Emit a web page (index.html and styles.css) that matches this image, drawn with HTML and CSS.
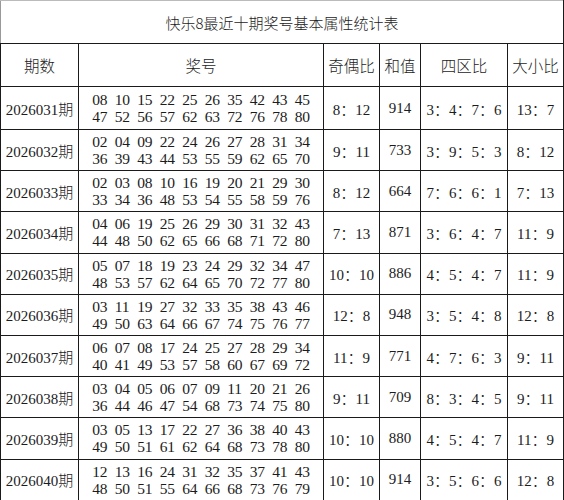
FILE: index.html
```html
<!DOCTYPE html>
<html lang="zh-CN">
<head>
<meta charset="utf-8">
<title>快乐8最近十期奖号基本属性统计表</title>
<link rel="stylesheet" href="styles.css">
</head>
<body>
<table class="stats">
  <colgroup>
    <col class="c-issue"><col class="c-nums"><col class="c-oe"><col class="c-sum"><col class="c-zone"><col class="c-bs">
  </colgroup>
  <tr class="title-row"><td colspan="6" class="title">快乐8最近十期奖号基本属性统计表</td></tr>
  <tr class="head-row">
    <td class="th">期数</td><td class="th">奖号</td><td class="th">奇偶比</td><td class="th">和值</td><td class="th">四区比</td><td class="th">大小比</td>
  </tr>
  <tr class="row first">
    <td class="issue">2026031<span class="cjk">期</span></td>
    <td><div class="nums"><span>08</span><span>10</span><span>15</span><span>22</span><span>25</span><span>26</span><span>35</span><span>42</span><span>43</span><span>45</span><span>47</span><span>52</span><span>56</span><span>57</span><span>62</span><span>63</span><span>72</span><span>76</span><span>78</span><span>80</span></div></td>
    <td class="val">8<span class="cjk">：</span>12</td><td class="val">914</td><td class="val">3<span class="cjk">：</span>4<span class="cjk">：</span>7<span class="cjk">：</span>6</td><td class="val">13<span class="cjk">：</span>7</td>
  </tr>
  <tr class="row">
    <td class="issue">2026032<span class="cjk">期</span></td>
    <td><div class="nums"><span>02</span><span>04</span><span>09</span><span>22</span><span>24</span><span>26</span><span>27</span><span>28</span><span>31</span><span>34</span><span>36</span><span>39</span><span>43</span><span>44</span><span>53</span><span>55</span><span>59</span><span>62</span><span>65</span><span>70</span></div></td>
    <td class="val">9<span class="cjk">：</span>11</td><td class="val">733</td><td class="val">3<span class="cjk">：</span>9<span class="cjk">：</span>5<span class="cjk">：</span>3</td><td class="val">8<span class="cjk">：</span>12</td>
  </tr>
  <tr class="row">
    <td class="issue">2026033<span class="cjk">期</span></td>
    <td><div class="nums"><span>02</span><span>03</span><span>08</span><span>10</span><span>16</span><span>19</span><span>20</span><span>21</span><span>29</span><span>30</span><span>33</span><span>34</span><span>36</span><span>48</span><span>53</span><span>54</span><span>55</span><span>58</span><span>59</span><span>76</span></div></td>
    <td class="val">8<span class="cjk">：</span>12</td><td class="val">664</td><td class="val">7<span class="cjk">：</span>6<span class="cjk">：</span>6<span class="cjk">：</span>1</td><td class="val">7<span class="cjk">：</span>13</td>
  </tr>
  <tr class="row">
    <td class="issue">2026034<span class="cjk">期</span></td>
    <td><div class="nums"><span>04</span><span>06</span><span>19</span><span>25</span><span>26</span><span>29</span><span>30</span><span>31</span><span>32</span><span>43</span><span>44</span><span>48</span><span>50</span><span>62</span><span>65</span><span>66</span><span>68</span><span>71</span><span>72</span><span>80</span></div></td>
    <td class="val">7<span class="cjk">：</span>13</td><td class="val">871</td><td class="val">3<span class="cjk">：</span>6<span class="cjk">：</span>4<span class="cjk">：</span>7</td><td class="val">11<span class="cjk">：</span>9</td>
  </tr>
  <tr class="row">
    <td class="issue">2026035<span class="cjk">期</span></td>
    <td><div class="nums"><span>05</span><span>07</span><span>18</span><span>19</span><span>23</span><span>24</span><span>29</span><span>32</span><span>34</span><span>47</span><span>48</span><span>53</span><span>57</span><span>62</span><span>64</span><span>65</span><span>70</span><span>72</span><span>77</span><span>80</span></div></td>
    <td class="val">10<span class="cjk">：</span>10</td><td class="val">886</td><td class="val">4<span class="cjk">：</span>5<span class="cjk">：</span>4<span class="cjk">：</span>7</td><td class="val">11<span class="cjk">：</span>9</td>
  </tr>
  <tr class="row">
    <td class="issue">2026036<span class="cjk">期</span></td>
    <td><div class="nums"><span>03</span><span>11</span><span>19</span><span>27</span><span>32</span><span>33</span><span>35</span><span>38</span><span>43</span><span>46</span><span>49</span><span>50</span><span>63</span><span>64</span><span>66</span><span>67</span><span>74</span><span>75</span><span>76</span><span>77</span></div></td>
    <td class="val">12<span class="cjk">：</span>8</td><td class="val">948</td><td class="val">3<span class="cjk">：</span>5<span class="cjk">：</span>4<span class="cjk">：</span>8</td><td class="val">12<span class="cjk">：</span>8</td>
  </tr>
  <tr class="row">
    <td class="issue">2026037<span class="cjk">期</span></td>
    <td><div class="nums"><span>06</span><span>07</span><span>08</span><span>17</span><span>24</span><span>25</span><span>27</span><span>28</span><span>29</span><span>34</span><span>40</span><span>41</span><span>49</span><span>53</span><span>57</span><span>58</span><span>60</span><span>67</span><span>69</span><span>72</span></div></td>
    <td class="val">11<span class="cjk">：</span>9</td><td class="val">771</td><td class="val">4<span class="cjk">：</span>7<span class="cjk">：</span>6<span class="cjk">：</span>3</td><td class="val">9<span class="cjk">：</span>11</td>
  </tr>
  <tr class="row">
    <td class="issue">2026038<span class="cjk">期</span></td>
    <td><div class="nums"><span>03</span><span>04</span><span>05</span><span>06</span><span>07</span><span>09</span><span>11</span><span>20</span><span>21</span><span>26</span><span>36</span><span>44</span><span>46</span><span>47</span><span>54</span><span>68</span><span>73</span><span>74</span><span>75</span><span>80</span></div></td>
    <td class="val">9<span class="cjk">：</span>11</td><td class="val">709</td><td class="val">8<span class="cjk">：</span>3<span class="cjk">：</span>4<span class="cjk">：</span>5</td><td class="val">9<span class="cjk">：</span>11</td>
  </tr>
  <tr class="row">
    <td class="issue">2026039<span class="cjk">期</span></td>
    <td><div class="nums"><span>03</span><span>05</span><span>13</span><span>17</span><span>22</span><span>27</span><span>36</span><span>38</span><span>40</span><span>43</span><span>49</span><span>50</span><span>51</span><span>61</span><span>62</span><span>64</span><span>68</span><span>73</span><span>78</span><span>80</span></div></td>
    <td class="val">10<span class="cjk">：</span>10</td><td class="val">880</td><td class="val">4<span class="cjk">：</span>5<span class="cjk">：</span>4<span class="cjk">：</span>7</td><td class="val">11<span class="cjk">：</span>9</td>
  </tr>
  <tr class="row">
    <td class="issue">2026040<span class="cjk">期</span></td>
    <td><div class="nums"><span>12</span><span>13</span><span>16</span><span>24</span><span>31</span><span>32</span><span>35</span><span>37</span><span>41</span><span>43</span><span>48</span><span>50</span><span>51</span><span>55</span><span>64</span><span>66</span><span>68</span><span>73</span><span>76</span><span>79</span></div></td>
    <td class="val">10<span class="cjk">：</span>10</td><td class="val">914</td><td class="val">3<span class="cjk">：</span>5<span class="cjk">：</span>6<span class="cjk">：</span>6</td><td class="val">12<span class="cjk">：</span>8</td>
  </tr>
</table>
</body>
</html>
```

FILE: styles.css
```css
html, body {
  margin: 0;
  padding: 0;
  background: #fff;
}

body {
  font-family: "Liberation Serif", "Noto Sans CJK SC", serif;
  color: #1c1c1c;
}

.stats {
  border-collapse: collapse;
  table-layout: fixed;
  width: 563px;
  font-size: 15px;
}

.c-issue { width: 78px; }
.c-nums { width: 245px; }
.c-oe { width: 56px; }
.c-sum { width: 41px; }
.c-zone { width: 87px; }
.c-bs { width: 56px; }

.stats td {
  border: 1px solid #1a1a1a;
  padding: 0;
  text-align: center;
  vertical-align: middle;
  white-space: nowrap;
}

.title-row td {
  border-top-color: #bbb;
  border-left-color: #999;
}

.title-row { height: 43px; }
.head-row { height: 43px; }
.row { height: 41.2px; }
.row.first { height: 43px; }

.title {
  font-family: "Noto Sans CJK SC", sans-serif;
  font-weight: 300;
  font-size: 15px;
  padding-top: 1px;
}

.th {
  font-family: "Noto Sans CJK SC", sans-serif;
  font-weight: 300;
  font-size: 15.5px;
}

.cjk {
  font-family: "Noto Sans CJK SC", sans-serif;
  font-weight: 300;
}

.issue {
  font-size: 15px;
}

.nums {
  display: grid;
  grid-template-columns: repeat(10, 15px);
  column-gap: 7.5px;
  justify-content: center;
  line-height: 17px;
  font-size: 15.5px;
}

.nums span {
  text-align: left;
  letter-spacing: -0.25px;
}

.val {
  font-size: 15px;
}
```
